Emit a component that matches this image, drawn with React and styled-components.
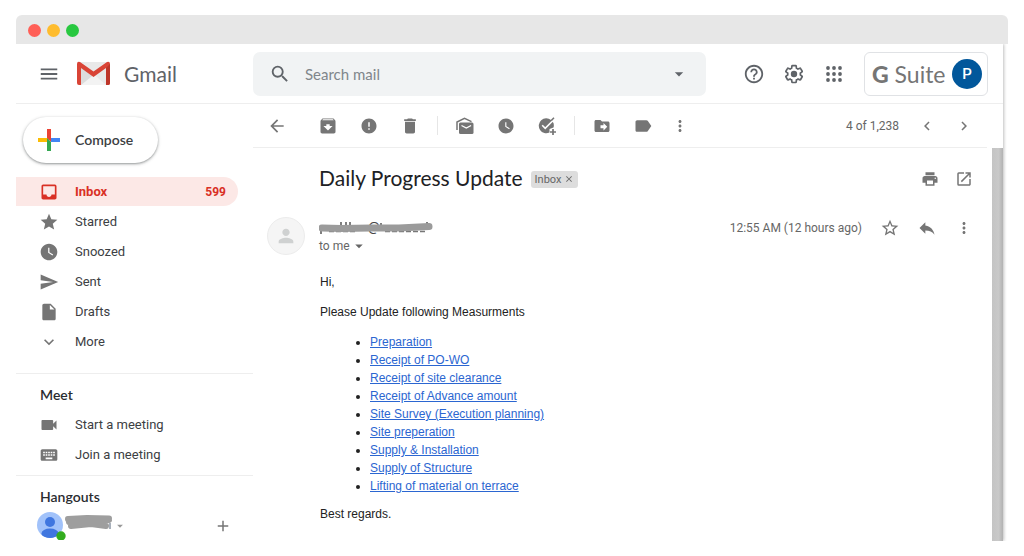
import React from 'react';
import styled, { createGlobalStyle } from 'styled-components';
import {
  MdMenu, MdSearch, MdArrowDropDown, MdHelpOutline, MdArrowBack, MdArchive,
  MdError, MdDelete, MdWatchLater, MdDriveFileMove, MdLabel, MdMoreVert, MdChevronLeft,
  MdChevronRight, MdPrint, MdOpenInNew, MdStarBorder, MdReply, MdInbox, MdStar, MdSend,
  MdInsertDriveFile, MdExpandMore, MdVideocam, MdKeyboard, MdAdd, MdPerson, MdClose,
} from 'react-icons/md';

const GlobalStyle = createGlobalStyle`
  * {
    box-sizing: border-box;
  }

  body {
    margin: 0;
    background: #fff;
    color: #202124;
    font-family: Roboto, 'Liberation Sans', sans-serif;
    font-size: 13px;
  }

  button {
    font-family: inherit;
    border: none;
    background: none;
    padding: 0;
    cursor: pointer;
  }
`;

// --- Window ---
const Window = styled.div`
  display: flex;
  flex-direction: column;
  height: 100vh;
  padding: 15px 16px;
`;

const TitleBar = styled.div`
  display: flex;
  align-items: center;
  gap: 6px;
  height: 29px;
  flex-shrink: 0;
  padding: 2px 12px 0;
  background: #e7e7e7;
  border-radius: 6px 6px 0 0;
`;

const Dot = styled.span`
  width: 13px;
  height: 13px;
  border-radius: 50%;
  background: ${(props) => props.$color};
`;

const Content = styled.div`
  display: flex;
  flex-direction: column;
  flex: 1;
  min-height: 0;
  margin-right: 5px;
  box-shadow: 1px 0 3px rgba(0, 0, 0, 0.25);
  clip-path: inset(0 -5px 0 0);
`;

// --- Header ---
const Header = styled.header`
  display: flex;
  align-items: center;
  height: 60px;
  flex-shrink: 0;
  padding-right: 15px;
  border-bottom: 1px solid #eeeeee;
  color: #5f6368;
`;

const Brand = styled.div`
  display: flex;
  align-items: center;
  width: 237px;
  flex-shrink: 0;
  padding-left: 22px;

  svg {
    display: block;
  }
`;

const BrandLogo = styled.svg`
  margin: 0 14px 0 17px;
`;

const BrandName = styled.span`
  font-family: Lato, sans-serif;
  font-size: 21px;
`;

const SearchForm = styled.form`
  display: flex;
  align-items: center;
  flex: 1;
  max-width: 720px;
  height: 44px;
  padding: 0 16px;
  border-radius: 7px;
  background: #f1f3f4;
`;

const SearchInput = styled.input`
  flex: 1;
  min-width: 0;
  margin-left: 14px;
  padding: 0;
  border: none;
  outline: none;
  background: none;
  font-family: Lato, sans-serif;
  font-size: 15px;
  color: #202124;

  &::placeholder {
    color: #80868b;
    opacity: 1;
  }
`;

const HeaderActions = styled.div`
  display: flex;
  align-items: center;
  margin-left: auto;
  padding-left: 28px;
`;

const IconButton = styled.button`
  display: flex;
  align-items: center;
  justify-content: center;
  width: ${(props) => props.$width || 40}px;
  height: 30px;
  color: ${(props) => props.$color || '#757575'};
`;

const SuiteBox = styled.div`
  display: flex;
  align-items: center;
  justify-content: space-between;
  width: 124px;
  height: 44px;
  margin-left: 10px;
  padding: 0 5px 0 7px;
  border: 1px solid #e0e2e5;
  border-radius: 6px;
`;

const SuiteName = styled.span`
  font-family: Lato, sans-serif;
  font-size: 23px;
  color: #757575;

  b {
    font-weight: 900;
  }
`;

const Account = styled.button`
  width: 30px;
  height: 30px;
  border-radius: 50%;
  background: #01579b;
  color: #fff;
  font-size: 15px;
  font-weight: 500;
`;

// --- Sidebar ---
const Body = styled.div`
  display: flex;
  flex: 1;
  min-height: 0;
`;

const Sidebar = styled.aside`
  width: 237px;
  flex-shrink: 0;
  overflow: hidden;
`;

const Compose = styled.button`
  display: flex;
  align-items: center;
  gap: 15px;
  width: 135px;
  height: 46px;
  margin: 13px 0 14px 7px;
  padding: 0 0 1px 15px;
  border-radius: 23px;
  background: #fff;
  box-shadow: 0 1px 2px rgba(60, 64, 67, 0.4), 0 1px 3px 1px rgba(60, 64, 67, 0.15);
  color: #3c4043;
  font-family: Lato, sans-serif;
  font-size: 14px;
  font-weight: 600;
`;

const NavList = styled.ul`
  list-style: none;
  margin: 0;
  padding: 0;
`;

const NavItem = styled.li`
  margin: 0 15px 1px 0;
`;

const NavLink = styled.a`
  display: flex;
  align-items: center;
  height: 29px;
  padding: 0 12px 0 23px;
  border-radius: 0 15px 15px 0;
  background: ${(props) => (props.$active ? '#fce8e6' : 'transparent')};
  color: ${(props) => (props.$active ? '#d93025' : '#3c4043')};
  font-weight: ${(props) => (props.$active ? 700 : 400)};
  text-decoration: none;

  svg {
    color: ${(props) => (props.$active ? '#d93025' : '#757575')};
    margin-right: 16px;
  }
`;

const Count = styled.span`
  margin-left: auto;
  font-size: 12px;
`;

const SideSection = styled.section`
  margin-top: ${(props) => props.$top}px;
  border-top: 1px solid #eeeeee;
`;

const SideTitle = styled.h2`
  margin: 0;
  padding: 12px 24px 6px;
  font-family: Lato, sans-serif;
  font-size: 14px;
  font-weight: 600;
  line-height: 18px;
  color: #2a2c30;
`;

const HangoutsRow = styled.div`
  display: flex;
  align-items: center;
  height: 28px;
  padding: 0 20px 0 21px;
  color: #999;
`;

const AddButton = styled(IconButton)`
  margin-left: auto;
`;

// --- Reading pane ---
const Main = styled.main`
  display: flex;
  flex-direction: column;
  flex: 1;
  min-width: 0;
`;

const Toolbar = styled.div`
  display: flex;
  align-items: center;
  gap: 1px;
  height: 44px;
  flex-shrink: 0;
  margin-right: 16px;
  padding-left: 4px;
  border-bottom: 1px solid #eeeeee;
`;

const BackButton = styled(IconButton)`
  margin-right: 10px;
`;

const Divider = styled.span`
  width: 1px;
  height: 19px;
  margin: 0 6px;
  background: #e6e6e6;
`;

const Pager = styled.div`
  display: flex;
  align-items: center;
  gap: 1px;
  margin-left: auto;
  margin-right: 5px;
  color: #666;
  font-size: 12px;

  span {
    margin-right: 9px;
  }
`;

const Scroller = styled.div`
  display: flex;
  flex: 1;
  min-height: 0;
`;

const Scrollbar = styled.div`
  width: 11px;
  background: linear-gradient(to right, #c4c4c4, #c9c9c9 60%, #b2b2b2);
`;

const Mail = styled.article`
  flex: 1;
  min-width: 0;
  overflow: hidden;
  padding: 16px 10px 0 14px;
`;

const SubjectRow = styled.div`
  display: flex;
  align-items: center;
  height: 30px;
  padding-left: 52px;
`;

const Subject = styled.h1`
  margin: 0;
  padding-bottom: 3px;
  font-family: Lato, sans-serif;
  font-size: 21px;
  font-weight: 400;
  color: #202124;
`;

const Chip = styled.button`
  display: flex;
  align-items: center;
  gap: 3px;
  height: 17px;
  margin-left: 8px;
  padding: 0 4px;
  border-radius: 3px;
  background: #dddddd;
  color: #666;
  font-size: 11px;
`;

const Right = styled.div`
  display: flex;
  align-items: center;
  margin-left: auto;
`;

const SenderRow = styled.div`
  display: flex;
  margin-top: 19px;
`;

const SenderAvatar = styled.div`
  display: flex;
  align-items: center;
  justify-content: center;
  width: 38px;
  height: 38px;
  margin: 4px 14px 0 0;
  border: 1px solid #ececec;
  border-radius: 50%;
  background: #f5f5f5;
  color: #cfd1d1;
`;

const Sender = styled.div`
  display: flex;
  flex-direction: column;
  padding-top: 6px;

  svg {
    display: block;
  }
`;

const ToMe = styled.button`
  display: flex;
  align-items: center;
  height: 18px;
  margin-top: 2px;
  color: #666;
  font-size: 12px;
`;

const Meta = styled(Right)`
  height: 30px;
  color: #666;
  font-size: 12px;

  time {
    margin-right: 10px;
  }
`;

const Message = styled.div`
  padding: 18px 0 0 53px;
  font-family: 'Liberation Sans', Arial, sans-serif;
  font-size: 12px;
  line-height: 18px;
  color: #222;

  p {
    margin: 0 0 12px;
  }
`;

const TaskList = styled.ul`
  margin: 0 0 10px;
  padding-left: 50px;

  a {
    color: #2b66d1;
  }
`;

// --- Drawings ---
function GmailLogo() {
  return (
    <BrandLogo width="33" height="25" viewBox="0 0 33 25" aria-hidden="true">
      <path d="M2 1h29v23H2z" fill="#e9e9e9" />
      <path d="M4 24 16.500 13 29 24z" fill="#f3f3f3" />
      <path d="M4 6v18L16.500 14z" fill="#dcdcdc" />
      <path d="M0 3v19q0 2 2 2h2V7L16.500 16 29 7v17h2q2 0 2-2V3q0-3-3-2L16.500 10.500 3 1Q0 0 0 3z" fill="#d94436" />
      <path d="M29 7 33 3v19q0 2-2 2h-2z" fill="#bd3529" />
    </BrandLogo>
  );
}

function PlusLogo() {
  return (
    <svg width="22" height="22" viewBox="0 0 22 22" aria-hidden="true">
      <path d="M0 9h11v4H0z" fill="#fbbc04" />
      <path d="M9 13h4v9H9z" fill="#34a853" />
      <path d="M13 9h9v4h-9z" fill="#4285f4" />
      <path d="M9 0h4v13L9 9z" fill="#ea4335" />
      <path d="M9 9 13 13H9z" fill="#34a853" />
    </svg>
  );
}

function GearIcon() {
  return (
    <svg width="22" height="22" viewBox="0 0 24 24" aria-hidden="true">
      <path
        d="M19.430 12.980c.04-.32.07-.64.07-.98s-.03-.66-.07-.98l2.110-1.650c.19-.15.24-.42.12-.64l-2-3.460c-.12-.22-.39-.3-.61-.22l-2.490 1c-.52-.4-1.080-.73-1.690-.98l-.38-2.650C14.460 2.180 14.250 2 14 2h-4c-.25 0-.46.18-.49.42l-.38 2.650c-.61.25-1.170.59-1.690.98l-2.490-1c-.23-.09-.49 0-.61.22l-2 3.460c-.13.22-.07.49.12.64l2.110 1.650c-.04.32-.07.65-.07.98s.03.66.07.98l-2.110 1.650c-.19.15-.24.42-.12.64l2 3.460c.12.22.39.3.61.22l2.490-1c.52.4 1.080.73 1.690.98l.38 2.650c.03.24.24.42.49.42h4c.25 0 .46-.18.49-.42l.38-2.650c.61-.25 1.170-.59 1.690-.98l2.490 1c.23.09.49 0 .61-.22l2-3.460c.12-.22.07-.49-.12-.64l-2.110-1.650z"
        fill="none"
        stroke="currentColor"
        strokeWidth="2"
        transform="translate(1 1) scale(.92)"
      />
      <circle cx="12" cy="12" r="3.500" fill="currentColor" />
    </svg>
  );
}

function AppsIcon() {
  return (
    <svg width="16" height="16" viewBox="0 0 16 16" fill="currentColor" aria-hidden="true">
      {[2, 8, 14].map((y) => [2, 8, 14].map((x) => <circle key={`${x}-${y}`} cx={x} cy={y} r="1.900" />))}
    </svg>
  );
}

function UnreadIcon() {
  return (
    <svg width="18" height="18" viewBox="0 0 18 18" fill="none" aria-hidden="true">
      <path d="M1 13V5L8.500 1.300 15.500 4.600" stroke="currentColor" strokeWidth="1.500" />
      <rect x="3" y="5.500" width="14.500" height="11.500" rx="1.500" fill="currentColor" />
      <path d="m5.500 8.500 4.800 2.600 4.800-2.600" stroke="#fff" strokeWidth="1.300" />
    </svg>
  );
}

function AddTaskIcon() {
  return (
    <svg width="18" height="18" viewBox="0 0 18 18" fill="none" aria-hidden="true">
      <path d="M13 2.900A7.500 7.500 0 1 0 11.500 15.500v-3.500l4-1.500a7.500 7.500 0 0 0 0-4.500z" fill="currentColor" />
      <path d="m4.200 8.300 3 3L15 3.500" stroke="#fff" strokeWidth="1.600" />
      <path d="m13.200 3.600 2.800-2.800" stroke="currentColor" strokeWidth="1.500" />
      <path d="M15 12v6M12 15h6" stroke="currentColor" strokeWidth="1.700" />
    </svg>
  );
}

function SenderMark() {
  return (
    <svg width="115" height="16" viewBox="0 0 115 16" role="img" aria-label="Sender hidden">
      <path d="M2 12v3M22 3v3M27 3v3M31 3v3M62 4v2M108 3v2" stroke="#555" strokeWidth="1.500" />
      <text x="49" y="12" fontFamily="Roboto, sans-serif" fontSize="13" fontWeight="700" fill="#444">@</text>
      <path d="M10 12.500h28M66 12.500h40" stroke="#777" strokeWidth="1.500" strokeDasharray="5 2" />
      <path d="M3 9 22 9.500 52 9 80 9 110 7.500" stroke="#9b9b9b" strokeWidth="7" strokeLinecap="round" fill="none" />
    </svg>
  );
}

function HangoutsUser() {
  return (
    <svg width="76" height="28" viewBox="0 0 76 28" role="img" aria-label="Hangouts account, name hidden">
      <clipPath id="user-circle"><circle cx="13" cy="13" r="13" /></clipPath>
      <circle cx="13" cy="13" r="13" fill="#a1c2fa" />
      <g clipPath="url(#user-circle)" fill="#3f76df">
        <circle cx="13" cy="10" r="5" />
        <ellipse cx="13" cy="21.500" rx="8.500" ry="5" />
      </g>
      <circle cx="24" cy="24" r="4.700" fill="#33ac1e" />
      <path d="M73 11v6" stroke="#8b96a5" strokeWidth="1.500" />
      <path d="M31 7 50 6 72 6.500M32 10l20 1 20-3M34 14l20-2 15 2" stroke="#9e9e9e" strokeWidth="6" strokeLinecap="round" strokeLinejoin="round" fill="none" />
    </svg>
  );
}

const folders = [
  { name: 'Inbox', icon: MdInbox, count: 599, active: true },
  { name: 'Starred', icon: MdStar },
  { name: 'Snoozed', icon: MdWatchLater },
  { name: 'Sent', icon: MdSend },
  { name: 'Drafts', icon: MdInsertDriveFile },
  { name: 'More', icon: MdExpandMore },
];

const meetings = [
  { name: 'Start a meeting', icon: MdVideocam },
  { name: 'Join a meeting', icon: MdKeyboard },
];

const tasks = [
  'Preparation',
  'Receipt of PO-WO',
  'Receipt of site clearance',
  'Receipt of Advance amount',
  'Site Survey (Execution planning)',
  'Site preperation',
  'Supply & Installation',
  'Supply of Structure',
  'Lifting of material on terrace',
];

function Nav({ items }) {
  return (
    <NavList>
      {items.map(({ name, icon: Icon, count, active }) => (
        <NavItem key={name}>
          <NavLink href="#" $active={active}>
            <Icon size={20} />
            {name}
            {count && <Count>{count}</Count>}
          </NavLink>
        </NavItem>
      ))}
    </NavList>
  );
}

function App() {
  return (
    <Window>
      <GlobalStyle />
      <TitleBar>
        <Dot $color="#ff5f57" />
        <Dot $color="#febc2e" />
        <Dot $color="#28c840" />
      </TitleBar>
      <Content>
        <Header>
          <Brand>
            <IconButton $width={22} $color="#5f6368" aria-label="Main menu"><MdMenu size={22} /></IconButton>
            <GmailLogo />
            <BrandName>Gmail</BrandName>
          </Brand>
          <SearchForm>
            <IconButton $width={22} $color="#5f6368" type="button" aria-label="Search"><MdSearch size={22} /></IconButton>
            <SearchInput type="text" placeholder="Search mail" aria-label="Search mail" />
            <IconButton $width={22} $color="#5f6368" type="button" aria-label="Search options"><MdArrowDropDown size={20} /></IconButton>
          </SearchForm>
          <HeaderActions>
            <IconButton $color="#5f6368" aria-label="Support"><MdHelpOutline size={22} /></IconButton>
            <IconButton $color="#5f6368" aria-label="Settings"><GearIcon /></IconButton>
            <IconButton $color="#5f6368" aria-label="Google apps"><AppsIcon /></IconButton>
            <SuiteBox>
              <SuiteName><b>G</b> Suite</SuiteName>
              <Account aria-label="Account">P</Account>
            </SuiteBox>
          </HeaderActions>
        </Header>
        <Body>
          <Sidebar>
            <Compose><PlusLogo />Compose</Compose>
            <Nav items={folders} />
            <SideSection $top={17}>
              <SideTitle>Meet</SideTitle>
              <Nav items={meetings} />
            </SideSection>
            <SideSection $top={6}>
              <SideTitle>Hangouts</SideTitle>
              <HangoutsRow>
                <HangoutsUser />
                <MdArrowDropDown size={14} />
                <AddButton $width={20} aria-label="New conversation"><MdAdd size={18} /></AddButton>
              </HangoutsRow>
            </SideSection>
          </Sidebar>
          <Main>
            <Toolbar>
              <BackButton aria-label="Back"><MdArrowBack size={20} /></BackButton>
              <IconButton aria-label="Archive"><MdArchive size={20} /></IconButton>
              <IconButton aria-label="Report spam"><MdError size={18} /></IconButton>
              <IconButton aria-label="Delete"><MdDelete size={20} /></IconButton>
              <Divider />
              <IconButton aria-label="Mark as unread"><UnreadIcon /></IconButton>
              <IconButton aria-label="Snooze"><MdWatchLater size={18} /></IconButton>
              <IconButton aria-label="Add to tasks"><AddTaskIcon /></IconButton>
              <Divider />
              <IconButton aria-label="Move to"><MdDriveFileMove size={18} /></IconButton>
              <IconButton aria-label="Labels"><MdLabel size={20} /></IconButton>
              <IconButton $width={32} aria-label="More"><MdMoreVert size={18} /></IconButton>
              <Pager>
                <span>4 of 1,238</span>
                <IconButton $width={36} aria-label="Newer"><MdChevronLeft size={18} /></IconButton>
                <IconButton $width={36} aria-label="Older"><MdChevronRight size={18} /></IconButton>
              </Pager>
            </Toolbar>
            <Scroller>
              <Mail>
                <SubjectRow>
                  <Subject>Daily Progress Update</Subject>
                  <Chip>Inbox <MdClose size={10} /></Chip>
                  <Right>
                    <IconButton $width={32} aria-label="Print"><MdPrint size={18} /></IconButton>
                    <IconButton $width={36} aria-label="Open in new window"><MdOpenInNew size={18} /></IconButton>
                  </Right>
                </SubjectRow>
                <SenderRow>
                  <SenderAvatar><MdPerson size={22} /></SenderAvatar>
                  <Sender>
                    <SenderMark />
                    <ToMe>to me <MdArrowDropDown size={18} /></ToMe>
                  </Sender>
                  <Meta>
                    <time>12:55 AM (12 hours ago)</time>
                    <IconButton $width={36} aria-label="Star"><MdStarBorder size={20} /></IconButton>
                    <IconButton $width={38} aria-label="Reply"><MdReply size={20} /></IconButton>
                    <IconButton $width={36} aria-label="More options"><MdMoreVert size={18} /></IconButton>
                  </Meta>
                </SenderRow>
                <Message>
                  <p>Hi,</p>
                  <p>Please Update following Measurments</p>
                  <TaskList>
                    {tasks.map((task) => (
                      <li key={task}><a href="#">{task}</a></li>
                    ))}
                  </TaskList>
                  <p>Best regards.</p>
                </Message>
              </Mail>
              <Scrollbar />
            </Scroller>
          </Main>
        </Body>
      </Content>
    </Window>
  );
}

export default App;
